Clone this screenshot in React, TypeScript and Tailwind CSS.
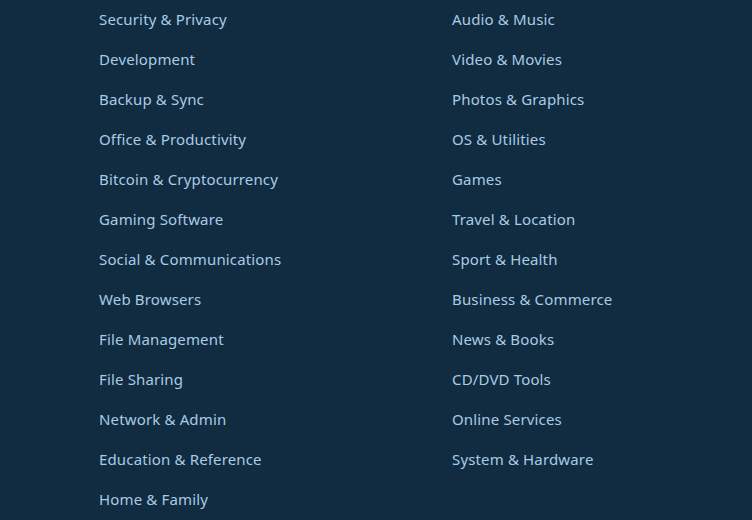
const LEFT = [
  'Security & Privacy',
  'Development',
  'Backup & Sync',
  'Office & Productivity',
  'Bitcoin & Cryptocurrency',
  'Gaming Software',
  'Social & Communications',
  'Web Browsers',
  'File Management',
  'File Sharing',
  'Network & Admin',
  'Education & Reference',
  'Home & Family',
];

const RIGHT = [
  'Audio & Music',
  'Video & Movies',
  'Photos & Graphics',
  'OS & Utilities',
  'Games',
  'Travel & Location',
  'Sport & Health',
  'Business & Commerce',
  'News & Books',
  'CD/DVD Tools',
  'Online Services',
  'System & Hardware',
];

function Column({ items }: { items: string[] }) {
  return (
    <ul className="flex flex-col">
      {items.map((label) => (
        <li key={label} className="h-10 flex items-center pb-0.5">
          <a href="#" className="text-[15px] tracking-[0.01em] text-[#a8cbe6] hover:text-white">
            {label}
          </a>
        </li>
      ))}
    </ul>
  );
}

export default function App() {
  return (
    <div
      className="min-h-screen bg-[#112c40] pl-[99px]"
      style={{ fontFamily: '"Noto Sans", "DejaVu Sans", sans-serif' }}
    >
      <div className="grid grid-cols-[353px_1fr]">
        <Column items={LEFT} />
        <Column items={RIGHT} />
      </div>
    </div>
  );
}
